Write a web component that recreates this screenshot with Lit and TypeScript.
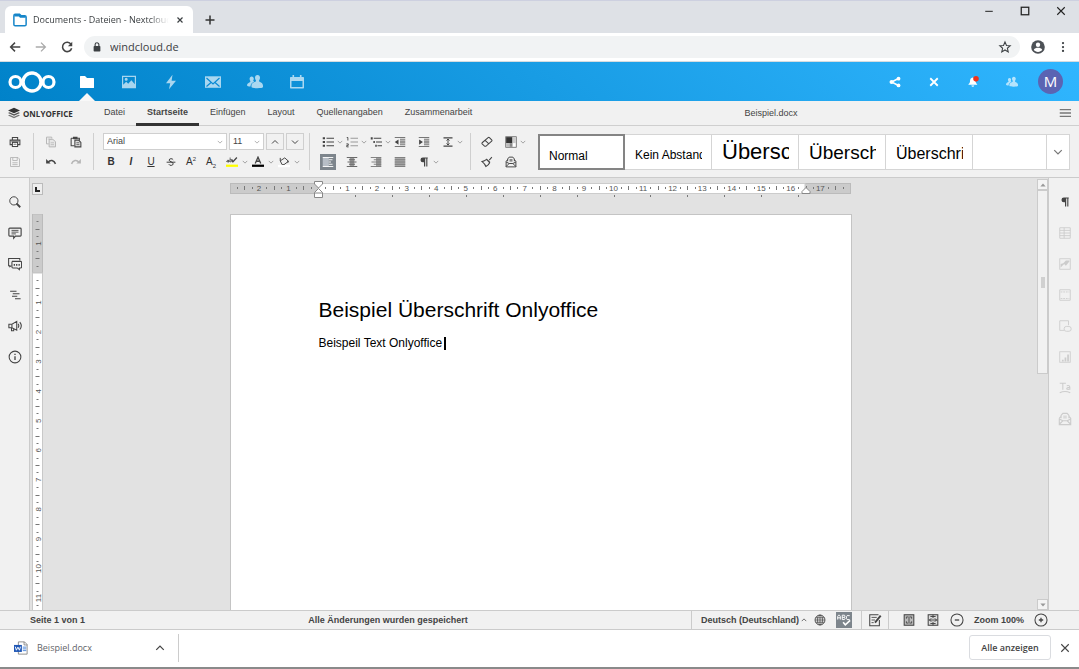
import { LitElement, html, css, svg, SVGTemplateResult } from "lit";
import { customElement } from "lit/decorators.js";
import { classMap } from "lit/directives/class-map.js";

/* ---------- icon set, all on a 16 x 16 grid, drawn in currentColor ---------- */
const G = "#9a9a9a";
const icons: Record<string, SVGTemplateResult> = {
  back: svg`<path d="M14 8H3M8 3L3 8l5 5" fill="none" stroke="currentColor" stroke-width="1.7"/>`,
  forward: svg`<path d="M2 8h11M8 3l5 5-5 5" fill="none" stroke="currentColor" stroke-width="1.5"/>`,
  reload: svg`<path d="M12.6 5A5.3 5.3 0 1 0 13.3 9.4" fill="none" stroke="currentColor" stroke-width="1.8"/><path d="M14 2v5H9z" fill="currentColor"/>`,
  lock: svg`<rect x="3.5" y="6.5" width="9" height="7.5" rx="1" fill="currentColor"/><path d="M5.5 7V4.800a2.500 2.500 0 0 1 5 0V7" fill="none" stroke="currentColor" stroke-width="1.5"/>`,
  star: svg`<path d="M8 2.200l1.700 4 4.300.4-3.300 2.800 1 4.200L8 11.400l-3.700 2.200 1-4.200L2 6.600l4.300-.4z" fill="none" stroke="currentColor" stroke-width="1.2"/>`,
  person: svg`<circle cx="8" cy="8" r="7.800" fill="currentColor"/><circle cx="8" cy="5.400" r="2.500" fill="#fff"/><path d="M3.200 11.200c.8-1.800 3-2.300 4.800-2.300s4 .5 4.800 2.300c-1 1.600-2.800 2.500-4.800 2.500s-3.800-.9-4.800-2.500z" fill="#fff"/>`,
  kebab: svg`<circle cx="8" cy="2.800" r="1.500" fill="currentColor"/><circle cx="8" cy="8" r="1.500" fill="currentColor"/><circle cx="8" cy="13.200" r="1.500" fill="currentColor"/>`,
  close: svg`<path d="M3 3l10 10M13 3L3 13" fill="none" stroke="currentColor" stroke-width="2.400"/>`,
  closeThin: svg`<path d="M2 2l12 12M14 2L2 14" fill="none" stroke="currentColor" stroke-width="1.800"/>`,
  plus: svg`<path d="M8 2v12M2 8h12" fill="none" stroke="currentColor" stroke-width="2"/>`,
  minimize: svg`<path d="M2 8.500h12" stroke="currentColor" stroke-width="1.600"/>`,
  maximize: svg`<rect x="2" y="2" width="12" height="12" fill="none" stroke="currentColor" stroke-width="2"/>`,
  favicon: svg`<path d="M2.500 1.500h5L9 3h4.500A1.500 1.500 0 0 1 15 4.500V13a1.500 1.500 0 0 1-1.500 1.500h-11A1.500 1.500 0 0 1 1 13V3a1.500 1.500 0 0 1 1.500-1.500z" fill="#fff" stroke="#1585c9" stroke-width="1.700"/><path d="M1.500 1.500H7.500l1.500 2h5.500v1.800H8L6.800 4H1.500z" fill="#1585c9"/>`,

  files: svg`<path d="M1.600 2a.6.6 0 0 0-.6.6v10.800c0 .4.200.6.600.6h12.800c.4 0 .6-.2.600-.6V4.600c0-.4-.2-.6-.6-.6H8L6 2z" fill="currentColor"/>`,
  photos: svg`<path fill-rule="evenodd" d="M1 1.800h14v12.400H1zM2.200 3v7.800l3-3 2 2 3.200-3.600 3.400 4V3zm3 .8a1.500 1.500 0 1 1 0 3 1.500 1.500 0 0 1 0-3z" fill="currentColor"/>`,
  activity: svg`<path d="M9.500.8L3 9.300h4.200L6 15.200l7-8.500H8.600z" fill="currentColor"/>`,
  mail: svg`<rect x="0" y="2.300" width="16" height="11.500" fill="currentColor"/><path d="M1.500 4L8 10l6.500-6M1.500 12.500l4.500-4M14.500 12.500L10 8.500" fill="none" stroke="#0b8ad6" stroke-width="1.200"/>`,
  contacts: svg`<path d="M10.500 1C8.900 1 8 2.300 8 3.800c0 1 .4 1.900.9 2.500v1.300C7.500 8.200 4.500 9 4.500 11.500V13c0 .8 2.500 1.200 5.800 1.200s5.700-.4 5.700-1.200v-1.300c0-2.700-2.700-3.400-3.900-4.100V6.300c.5-.6.900-1.500.9-2.500C13 2.300 12.100 1 10.500 1z" fill="currentColor"/><path d="M4.700 2.500c-1.300 0-2.100 1-2.100 2.300 0 .9.300 1.600.7 2.100v1C2.200 8.500 0 9.200 0 11.200c0 1 1.500 1.200 3.500 1.300.1-2.600 1.500-3.700 3.800-4.900C6.900 7.400 6.500 7 6.100 6.800c.4-.4.7-1.100.7-2 0-1.300-.8-2.300-2.100-2.300z" fill="currentColor"/>`,
  calendar: svg`<path fill-rule="evenodd" d="M3.500 1h1.600v2h5.800V1h1.600v2H14c.6 0 1 .4 1 1v9.500c0 .6-.4 1-1 1H2c-.6 0-1-.4-1-1V4c0-.6.4-1 1-1h1.500zM2.500 7v6h11V7z" fill="currentColor"/>`,
  share: svg`<path d="M12.500 3.300L3.500 8l9 4.700" fill="none" stroke="currentColor" stroke-width="2"/><circle cx="12.700" cy="3.500" r="2.500" fill="currentColor"/><circle cx="3.500" cy="8" r="2.800" fill="currentColor"/><circle cx="12.700" cy="12.500" r="2.500" fill="currentColor"/>`,
  bell: svg`<path d="M7.500 2C5 2.500 4 4.500 4 7.300c0 1.700-1 2.700-2 3.500v.9h11.500v-.9c-1-.8-2-1.800-2-3.500 0-2.800-1.200-4.800-4-5.300zM5.800 12.700a2 2 0 0 0 3.900 0z" fill="currentColor"/><circle cx="12" cy="3.800" r="3.700" fill="#f0321c"/>`,

  stack: svg`<path d="M8 1l8 3.700-8 3.700L0 4.700z" fill="#333"/><path d="M2 7l6 2.800L14 7l2 1-8 3.700L0 8z" fill="#555"/><path d="M2 10.300l6 2.800 6-2.800 2 1L8 15l-8-3.700z" fill="#777"/>`,
  menu: svg`<path d="M1 3.500h15M1 8h15M1 12.500h15" stroke="#777" stroke-width="1.700"/>`,
  print: svg`<path d="M4.500 5V2h7v3M4.500 11.500h-3V5.500h13v6h-3" fill="none" stroke="currentColor" stroke-width="1.400"/><rect x="4.500" y="8.500" width="7" height="5.500" fill="#fff" stroke="currentColor" stroke-width="1.400"/><path d="M3 7h10M6 11h4" stroke="currentColor"/>`,
  save: svg`<path d="M2 2h10l2 2v10H2z" fill="none" stroke="currentColor" stroke-width="1.200"/><path d="M5 2v4h6V2M4.500 9h7M4.500 11.500h7" fill="none" stroke="currentColor" stroke-width="1.200"/>`,
  copy: svg`<path d="M2 1.500h7v2M2 1.500v9h3" fill="none" stroke="currentColor" stroke-width="1.300"/><path d="M5.500 4.500h5l3.500 3v7H5.500z" fill="#e6e6e6" stroke="currentColor" stroke-width="1.300"/><path d="M3.500 4h4M7.500 9h4.500M7.500 11.500h4.500" stroke="currentColor"/>`,
  paste: svg`<path d="M1.500 3h11v3M1.500 3v10H6" fill="none" stroke="currentColor" stroke-width="1.400"/><rect x="4" y="1" width="6" height="3.200" fill="currentColor"/><path d="M6.500 5.500h5l3 3v6h-8z" fill="#ddd" stroke="currentColor" stroke-width="1.400"/><path d="M8.500 9h4M8.500 11.500h4" stroke="currentColor"/>`,
  undo: svg`<path d="M1.500 4v6h6z" fill="currentColor"/><path d="M4 8.500c3-4 8-3 10 2" fill="none" stroke="currentColor" stroke-width="2"/>`,
  redo: svg`<path d="M14.500 4v6h-6z" fill="currentColor"/><path d="M12 8.500c-3-4-8-3-10 2" fill="none" stroke="currentColor" stroke-width="2"/>`,
  highlight: svg`<path d="M1 8c0-3 3-3 3 0v-3M4 8H2.500C1 8 1 6.500 2.500 6.500H4M5.500 2v6M5.500 5c2.500-1.500 3.500 3 0 3" fill="none" stroke="currentColor"/><path d="M9 8l5.500-6M7.500 4.500l2 4" stroke="currentColor" stroke-width="1.700"/><rect x="0" y="11.500" width="16" height="3" fill="#ffff00"/>`,
  fontColor: svg`<path d="M4.300 10L8 1.500 11.700 10M5.500 7h5" fill="none" stroke="currentColor" stroke-width="1.700"/><rect x="0" y="11.500" width="16" height="3" fill="#000"/>`,
  fill: svg`<path d="M3 6.500L9 2.500l5 4.500-6 4.500H5.500zM3 2.500v4" fill="none" stroke="currentColor" stroke-width="1.300"/><path d="M12 5.500l2.500 2-1.500 2z" fill="currentColor"/><rect x="0" y="12" width="16" height="3" fill="#fff"/>`,
  strike: svg`<path d="M11.500 4.500C10.500 2 5 2 5 5c0 2.500 6.500 2.500 6.500 6 0 3-6 3.300-7 .5M1 8.300h14" fill="none" stroke="currentColor" stroke-width="1.500"/>`,
  bullets: svg`<path d="M6 3h10M6 8h10M6 13h10" stroke="currentColor" stroke-width="1.500"/><path d="M1 1.700h3v2.600H1zM1 6.700h3v2.600H1zM1 11.700h3v2.600H1z" fill="currentColor"/>`,
  numbers: svg`<path d="M6 3h10M6 8h10M6 13h10" stroke="${G}" stroke-width="1.500"/><path d="M1 2h1.500v4M.5 10.500h2.500v2H1v2h2.500" fill="none" stroke="currentColor" stroke-width="1.200"/>`,
  multilevel: svg`<path d="M5 3h10M8 8h8M10 13h6" stroke="currentColor" stroke-width="1.500"/><path d="M1 1.500h2.600v3H1zM4.500 6.700h2v2.600h-2zM7 11.700h2v2.600H7z" fill="currentColor"/>`,
  outdent: svg`<path d="M1 2h14M1 14h14M8 4.400h7M8 6.800h7M8 9.200h7M8 11.600h7" stroke="#777" stroke-width="1.500"/><path d="M6 4.500v7L1 8z" fill="currentColor"/>`,
  indent: svg`<path d="M1 2h14M1 14h14M8 4.400h7M8 6.800h7M8 9.200h7M8 11.600h7" stroke="#777" stroke-width="1.500"/><path d="M1.500 4.500v7l5-3.500z" fill="currentColor"/>`,
  spacing: svg`<path d="M2 2.500h12M2 13.500h12" stroke="currentColor" stroke-width="1.500"/><path d="M8 4v8M6 6l2-2 2 2M6 10l2 2 2-2" fill="none" stroke="currentColor" stroke-width="1.300"/>`,
  alignLeft: svg`<rect x="1" y="2" width="8" height="12" fill="#b7bec6"/><path d="M1 2h14M1 14h14M9 5h5M9 8h3M9 11h5" stroke="#fff" stroke-width="1.200"/>`,
  alignCenter: svg`<rect x="5" y="2" width="6" height="12" fill="${G}"/><path d="M1 2h14M4 5h8M2 8h12M4 11h8M1 14h14" stroke="#666" stroke-width="1.300"/>`,
  alignRight: svg`<rect x="8" y="2" width="7" height="12" fill="${G}"/><path d="M1 2h14M5 5h10M2 8h13M5 11h10M1 14h14" stroke="#777" stroke-width="1.200"/>`,
  justify: svg`<rect x="1" y="2" width="14" height="12" fill="#aaa"/><path d="M1 2h14M1 5h14M1 8h14M1 11h14M1 14h14" stroke="#777" stroke-width="1.200"/>`,
  para: svg`<path d="M13 2H6.500a3.200 3.200 0 0 0 0 6.400H8V14h1.600V3.300H11V14h1.500V3.300h.5z" fill="currentColor"/>`,
  eraser: svg`<path d="M1.500 9L9.500 2.200c.6-.5 1.200-.5 1.700 0l3 3c.5.500.5 1.200 0 1.700L6.500 13.700H5l-3.500-3.300c-.4-.4-.4-1 0-1.400zM5.500 5.700l5 4.700" fill="none" stroke="currentColor" stroke-width="1.400"/>`,
  brush: svg`<path d="M14.500 1.500L11 5.500M7.500 4.500C5.500 6 3.500 7 1.500 7.500c2 1.500 4 4 5 6.500 2-1 4-2.500 5-5zM7 4l5 4.500" fill="none" stroke="currentColor" stroke-width="1.400"/>`,
  scheme: svg`<rect x="1" y="1" width="14" height="14" fill="#fff" stroke="#555"/><rect x="1.500" y="1.500" width="8.500" height="8" fill="#333"/><rect x="10" y="1.500" width="4.500" height="8" fill="#ccc"/><rect x="1.500" y="9.500" width="4.500" height="5" fill="#bbb"/><rect x="6" y="9.500" width="4" height="5" fill="#888"/>`,
  merge: svg`<path d="M3.500 7V4l2-2.500h5l2 2.500v3M1.500 7v7.500h13V7l-2-2M1.500 7l2-2M1.500 14l4-4h5l4 4M1.500 8l4 2M14.500 8l-4 2" fill="none" stroke="currentColor" stroke-width="1.300"/><path d="M6 4h4v3.500H6z" fill="currentColor" opacity=".6"/>`,

  search: svg`<circle cx="6.500" cy="6.500" r="5.500" fill="none" stroke="currentColor" stroke-width="1.300"/><path d="M10 10l5 5" stroke="currentColor" stroke-width="2.400"/>`,
  comment: svg`<path d="M2 2.500h12a1 1 0 0 1 1 1v7a1 1 0 0 1-1 1H8.500L6.500 14V11.500H2a1 1 0 0 1-1-1v-7a1 1 0 0 1 1-1z" fill="none" stroke="currentColor" stroke-width="1.300"/><path d="M4 5h8M4 7h8M4 9h5" stroke="currentColor"/>`,
  chat: svg`<path d="M4 10L2 11V10H.7V1.700h12.800V4" fill="none" stroke="currentColor" stroke-width="1.200"/><path d="M5 5h9.500a1 1 0 0 1 1 1v5.500a1 1 0 0 1-1 1h-1.500v2l-2.500-2H5.500a1 1 0 0 1-1-1V6z" fill="#f1f1f1" stroke="currentColor" stroke-width="1.200"/><path d="M6.500 8h1.500v2H6.500zM9.200 8h1.500v2H9.200zM12 8h1.500v2H12z" fill="currentColor"/>`,
  outline: svg`<path d="M1.500 3H10M5 6.300h9M4 9.700h7M8 13h7.500" stroke="currentColor" stroke-width="1.500"/>`,
  speaker: svg`<path d="M1 6h3.500L10 2.700v10L4.500 10H1zM4 10v3.500h2.500V11M4.500 6v4" fill="none" stroke="currentColor" stroke-width="1.200"/><path d="M11.500 5.500c1 1.300 1 3.200 0 4.500M13.500 3.500c2 2.500 2 6 0 8.500" fill="none" stroke="currentColor" stroke-width="1.200"/>`,
  info: svg`<circle cx="8" cy="8" r="6.700" fill="none" stroke="currentColor" stroke-width="1.200"/><path d="M8 7v4.500M8 4.300v1.500" stroke="currentColor" stroke-width="1.500"/>`,

  table: svg`<path d="M2 2h12v12H2zM2 5h12M2 8h12M2 11h12M7 2v12" fill="none" stroke="currentColor"/>`,
  image: svg`<rect x="2" y="2" width="12" height="12" fill="none" stroke="currentColor"/><path d="M3 12l4-4 2 2 4-5v-1H9l-3 3-3 1z" fill="currentColor"/>`,
  headerFooter: svg`<path d="M2 2h12v12H2z" fill="none" stroke="currentColor"/><path d="M3 4.500h10M3 12h10" stroke="currentColor" stroke-dasharray="2 1"/>`,
  shape: svg`<path d="M7 13H2V2h10v5" fill="none" stroke="currentColor"/><rect x="7" y="8.500" width="8" height="5.500" rx="2.500" fill="none" stroke="currentColor"/>`,
  chart: svg`<rect x="2" y="2" width="12" height="12" fill="none" stroke="currentColor"/><path d="M5.500 13v-2M8.500 13V8.500M11.500 13V5" stroke="currentColor" stroke-width="2"/>`,
  textArt: svg`<path d="M2 2.500h7M5.500 2.500V10M10 5.500c3-1 3.500.5 3.500 2V10M13.500 7.200c-5 0-4.500 3.500 0 2M2 13.500c4-2 8-2 12 0" fill="none" stroke="currentColor" stroke-width="1.200"/>`,

  globe: svg`<circle cx="8" cy="8" r="6.600" fill="none" stroke="currentColor" stroke-width="1.200"/><path d="M1.500 8h13M8 1.500v13M2.500 5h11M2.500 11h11" stroke="currentColor"/><ellipse cx="8" cy="8" rx="3.300" ry="6.500" fill="none" stroke="currentColor"/>`,
  spell: svg`<path d="M.8 7.500V4l1-1.500h1l1 1.500v3.500M.8 5.500h3M6 2.500v5h2.500l.7-1-.7-1.500.7-1.500-.7-1zM6 5h2.500M14.500 3h-3l-.7 1v2.500l.7 1h3" fill="none" stroke="#fff" stroke-width="1.100"/><path d="M7 10.500l2.500 3L15 8.500" fill="none" stroke="#fff" stroke-width="1.800"/>`,
  track: svg`<path d="M12 2H2v12.500h11V8" fill="none" stroke="currentColor" stroke-width="1.200"/><path d="M4 5h6M4 8h4M4 11h2.500" stroke="currentColor"/><path d="M14.500 3L8 11" stroke="currentColor" stroke-width="2.200"/>`,
  fitPage: svg`<rect x="2.500" y="2" width="11" height="12" fill="#bbb" stroke="currentColor" stroke-width="1.200"/><path d="M5 4.500h2M5 4.500v2M11 4.500H9M11 4.500v2M5 11.500h2M5 11.500v-2M11 11.500H9M11 11.500v-2M8 4v8" fill="none" stroke="currentColor"/>`,
  fitWidth: svg`<rect x="2.500" y="2" width="11" height="12" fill="#ddd" stroke="currentColor" stroke-width="1.200"/><path d="M3 8h10M6 6L4 8l2 2M10 6l2 2-2 2M8 2v4M8 10v4M5 4h6M5 12h6" fill="none" stroke="currentColor" stroke-width="1.100"/>`,
  zoomOut: svg`<circle cx="8" cy="8" r="6.900" fill="none" stroke="currentColor" stroke-width="1.200"/><path d="M5.500 8h5" stroke="currentColor" stroke-width="1.500"/>`,
  zoomIn: svg`<circle cx="8" cy="8" r="6.900" fill="none" stroke="currentColor" stroke-width="1.200"/><path d="M5.500 8h5M8 5.500v5" stroke="currentColor" stroke-width="1.500"/>`,
  word: svg`<path d="M5 1h7l3 3v11H5z" fill="#fff" stroke="#777" stroke-width=".9"/><path d="M11.500 1v3.500H15" fill="none" stroke="#777" stroke-width=".9"/><path d="M10 7h4M10 9h4M10 11h4" stroke="#3f7ed8"/><rect x="0" y="4.500" width="9" height="8" fill="#1f57b5"/><path d="M1.500 6.500l1.200 4L4.500 7l1.700 3.500 1.200-4" fill="none" stroke="#fff" stroke-width="1.100"/>`,
  down: svg`<path d="M2 5l6 6 6-6" fill="none" stroke="currentColor" stroke-width="2"/>`,
  up: svg`<path d="M2 11l6-6 6 6" fill="none" stroke="currentColor" stroke-width="2"/>`,
  triUp: svg`<path d="M1 12l7-8 7 8z" fill="currentColor"/>`,
  triDown: svg`<path d="M1 4l7 8 7-8z" fill="currentColor"/>`,
};

const icon = (name: string, size = "s12") =>
  html`<svg class="icon ${size}" viewBox="0 0 16 16" aria-hidden="true">${icons[name]}</svg>`;

const shared = css`
  *, *::before, *::after { box-sizing: border-box; }
  button, select, input { font: inherit; color: inherit; }
  button { display: flex; align-items: center; justify-content: center; margin: 0; padding: 0; border: 0; background: none; }
  a { color: inherit; text-decoration: none; }
  .icon { display: block; flex: none; }
  .s6 { width: 6px; height: 6px; }
  .s8 { width: 8px; height: 8px; }
  .s10 { width: 10px; height: 10px; }
  .s12 { width: 12px; height: 12px; }
  .s14 { width: 14px; height: 14px; }
  .s16 { width: 16px; height: 16px; }
`;

/* ---------- browser window chrome ---------- */
@customElement("browser-bar")
class BrowserBar extends LitElement {
  static styles = [shared, css`
    :host { display: block; font-family: "Open Sans", "Noto Sans", sans-serif; color: #3c4043; }
    .strip { display: flex; align-items: flex-end; height: 33px; padding-left: 5px; background: #dee1e6; border-top: 1px solid #cdd0e0; }
    .tab { display: flex; align-items: center; gap: 6px; width: 188px; height: 27px; padding: 0 9px 0 8px; background: #fff; border-radius: 6px 6px 0 0; }
    .title { flex: 1; overflow: hidden; white-space: nowrap; font-size: 9px; line-height: 14px; mask-image: linear-gradient(90deg, #000 85%, transparent 99%); }
    .new { width: 33px; height: 27px; color: #333; }
    .window { display: flex; align-self: flex-start; margin-left: auto; color: #222; }
    .window button { width: 36px; height: 20px; }
    .bar { display: flex; align-items: center; height: 29px; padding-left: 2px; background: #fff; border-bottom: 1px solid #d5dce0; }
    .nav { width: 26px; height: 28px; color: #444; }
    .nav.dim { color: #aaa; }
    .omni { display: flex; flex: 1; align-items: center; gap: 7px; height: 22px; margin: 0 8px 0 4px; padding: 0 8px 0 7px; border-radius: 11px; background: #f1f3f4; }
    .url { flex: 1; min-width: 0; padding: 0; border: 0; outline: 0; background: none; font-size: 11px; line-height: 16px; }
    .person { width: 19px; color: #4d5156; }
    .more { width: 32px; }
  `];
  render() {
    return html`
      <div class="strip">
        <div class="tab">${icon("favicon", "s14")}<span class="title">Documents - Dateien - Nextcloud</span>
          <button aria-label="Tab schließen">${icon("close", "s8")}</button></div>
        <button class="new" aria-label="Neuer Tab">${icon("plus")}</button>
        <div class="window">
          <button aria-label="Minimieren">${icon("minimize", "s10")}</button>
          <button aria-label="Maximieren">${icon("maximize", "s10")}</button>
          <button aria-label="Schließen">${icon("closeThin", "s10")}</button>
        </div>
      </div>
      <div class="bar">
        <button class="nav" aria-label="Zurück">${icon("back", "s14")}</button>
        <button class="nav dim" aria-label="Vorwärts">${icon("forward", "s14")}</button>
        <button class="nav" aria-label="Neu laden">${icon("reload", "s14")}</button>
        <div class="omni">${icon("lock", "s12")}
          <input class="url" aria-label="Adresse" value="windcloud.de">
          <button aria-label="Lesezeichen">${icon("star", "s14")}</button></div>
        <button class="person" aria-label="Profil">${icon("person", "s14")}</button>
        <button class="more" aria-label="Menü">${icon("kebab", "s12")}</button>
      </div>`;
  }
}

/* ---------- cloud header ---------- */
@customElement("cloud-header")
class CloudHeader extends LitElement {
  static styles = [shared, css`
    :host { display: flex; align-items: stretch; justify-content: space-between; height: 39px; padding: 0 9px 0 8px;
      background: linear-gradient(40deg, #0082c9 0%, #30b6ff 100%); color: #fff; font-family: "Open Sans", sans-serif; }
    nav, .side { display: flex; }
    .logo { display: flex; align-items: center; width: 58px; }
    .logo svg { width: 48px; height: 24px; }
    .app { position: relative; display: flex; align-items: center; justify-content: center; width: 42px; opacity: .65; }
    .app.on { opacity: 1; }
    .app.on::after { content: ""; position: absolute; bottom: 0; border: 8px solid transparent; border-top-width: 0; border-bottom-color: #f8f8f8; }
    .side button { width: 39px; }
    .side .dim { opacity: .65; }
    .avatar { width: 25px; height: 25px; border-radius: 50%; background: #5b64b3; font-size: 15px; line-height: 25px; }
  `];
  render() {
    const apps = [["files", "Dateien"], ["photos", "Fotos"], ["activity", "Aktivität"], ["mail", "E-Mail"], ["contacts", "Kontakte"], ["calendar", "Kalender"]];
    return html`
      <nav>
        <a class="logo" href="#" aria-label="Startseite"><svg viewBox="0 0 48 24"><g fill="none" stroke="#fff">
          <circle cx="24" cy="12" r="9" stroke-width="3.500"/><circle cx="7.500" cy="12" r="5.500" stroke-width="3.200"/><circle cx="40.500" cy="12" r="5.500" stroke-width="3.200"/></g></svg></a>
        ${apps.map(([i, label], n) => html`<a class=${classMap({ app: true, on: n === 0 })} href="#" aria-label=${label}>${icon(i, "s16")}</a>`)}
      </nav>
      <div class="side">
        <button aria-label="Teilen">${icon("share", "s12")}</button>
        <button aria-label="Schließen">${icon("close", "s12")}</button>
        <button aria-label="Benachrichtigungen">${icon("bell", "s12")}</button>
        <button class="dim" aria-label="Kontakte">${icon("contacts", "s12")}</button>
        <button aria-label="Konto"><span class="avatar">M</span></button>
      </div>`;
  }
}

/* ---------- editor tabs and toolbar ---------- */
@customElement("editor-toolbar")
class EditorToolbar extends LitElement {
  static styles = [shared, css`
    :host { display: block; background: #f1f1f1; color: #444; font-family: "Liberation Sans", Arial, sans-serif; font-size: 9px; }
    .tabs { display: flex; align-items: stretch; height: 25px; padding: 0 8px; border-bottom: 1px solid #cfcfcf; }
    .brand { display: flex; align-items: center; gap: 3px; width: 85px; font-family: "Open Sans", sans-serif; font-size: 8px; font-weight: 700; color: #333; }
    .tab { height: 25px; padding: 0 11px; line-height: 22px; border-bottom: 3px solid transparent; }
    .tab.on { font-weight: 700; border-bottom-color: #333; }
    .file { flex: 1; text-align: center; line-height: 25px; }
    .tools { display: flex; align-items: center; height: 52px; padding: 0 9px 0 6px; border-bottom: 1px solid #cbcbcb; }
    .group { display: grid; grid-template-rows: 18px 18px; row-gap: 2px; }
    .row { display: flex; align-items: center; }
    .sep { width: 1px; height: 37px; background: #cfcfcf; flex: none; }
    .ib { width: 18px; height: 18px; }
    .dim { color: #b5b5b5; }
    .chev { width: 8px; height: 18px; color: #888; }
    .g1 { width: 27px; }
    .g2 { width: 59px; padding-left: 8px; }
    .g2 .row { gap: 7px; }
    .g3 { width: 215px; padding-left: 7px; }
    .g3 .fields { gap: 2px; padding-left: 2px; }
    .box { position: relative; display: flex; height: 17px; }
    .box select { width: 100%; appearance: none; padding: 0 3px; border: 1px solid #cfcfcf; border-radius: 0; background: #fff; font-size: 9px; line-height: 15px; outline: 0; }
    .box .icon { position: absolute; right: 4px; top: 6px; color: #999; pointer-events: none; }
    .font { width: 124px; }
    .size { width: 35px; }
    .step { width: 18px; height: 17px; border: 1px solid #cfcfcf; }
    .g3 .ib.t { width: 20px; font-size: 10px; line-height: 18px; color: #333; }
    .b { font-weight: 700; } .i { font-style: italic; font-weight: 700; } .u { text-decoration: underline; }
    .sup sup, .sub sub { font-size: 6px; line-height: 1; }
    .pair { display: flex; padding-left: 0; width: 26px; flex: none; }
    .pair:first-of-type { width: 28px; padding-left: 2px; }
    .g4 { width: 160px; padding-left: 10px; }
    .cell { display: flex; width: 24px; align-items: center; }
    .cell .ib { width: 16px; height: 16px; }
    .cell .on { background: #7d858c; }
    .g5 { width: 67px; padding-left: 8px; }
    .styles { display: flex; flex: 1; min-width: 0; height: 36px; background: #fff; border: 1px solid #d5d5d5; }
    .style { align-items: flex-start; justify-content: flex-start; width: 87px; flex: none; height: 34px; padding: 0 9px 0 10px; border-right: 1px solid #d5d5d5; color: #000; overflow: hidden; }
    .style span { flex: 1; overflow: hidden; white-space: nowrap; line-height: 30px; text-align: left; }
    .style span::before { content: ""; display: inline-block; height: 24px; }
    .style.on { height: 36px; width: 87px; margin: -1px 0 -1px -1px; padding: 0 9px; border: 2px solid #848484; }
    .n12 { font-size: 12px; } .n22 { font-size: 22px; } .n19 { font-size: 19px; } .n16 { font-size: 16px; }
    .rest { flex: 1; }
    .drop { width: 23px; border-left: 1px solid #d5d5d5; color: #777; }
  `];
  cell(name: string, label: string, menu = false, on = false) {
    return html`<div class="cell"><button class=${classMap({ ib: true, on })} aria-label=${label}>${icon(name)}</button>
      ${menu ? html`<button class="chev" aria-label="${label}: Optionen">${icon("down", "s6")}</button>` : ""}</div>`;
  }
  render() {
    const tabs = ["Datei", "Startseite", "Einfügen", "Layout", "Quellenangaben", "Zusammenarbeit"];
    const looks: [string, string][] = [["Normal", "n12"], ["Kein Abstand", "n12"], ["Überschrift 1", "n22"], ["Überschrift 2", "n19"], ["Überschrift 3", "n16"]];
    const ib = (n: string, l: string, c = "") => html`<button class="ib ${c}" aria-label=${l}>${icon(n)}</button>`;
    const pair = (n: string, l: string) => html`<div class="pair">${ib(n, l)}<button class="chev" aria-label="${l}: Optionen">${icon("down", "s6")}</button></div>`;
    return html`
      <div class="tabs">
        <div class="brand">${icon("stack", "s12")}ONLYOFFICE</div>
        ${tabs.map(t => html`<button class=${classMap({ tab: true, on: t === "Startseite" })}>${t}</button>`)}
        <span class="file">Beispiel.docx</span>
        <button aria-label="Ansicht">${icon("menu", "s12")}</button>
      </div>
      <div class="tools">
        <div class="group g1"><div class="row">${ib("print", "Drucken")}</div><div class="row">${ib("save", "Speichern", "dim")}</div></div>
        <div class="sep"></div>
        <div class="group g2"><div class="row">${ib("copy", "Kopieren", "dim")}${ib("paste", "Einfügen")}</div>
          <div class="row">${ib("undo", "Rückgängig")}${ib("redo", "Wiederholen", "dim")}</div></div>
        <div class="sep"></div>
        <div class="group g3">
          <div class="row fields">
            <label class="box font"><select aria-label="Schriftart"><option>Arial</option></select>${icon("down", "s6")}</label>
            <label class="box size"><select aria-label="Schriftgrad"><option>11</option></select>${icon("down", "s6")}</label>
            <button class="step" aria-label="Größer">${icon("up", "s8")}</button>
            <button class="step" aria-label="Kleiner">${icon("down", "s8")}</button>
          </div>
          <div class="row">
            <button class="ib t b">B</button><button class="ib t i">I</button><button class="ib t u">U</button>
            <button class="ib t" aria-label="Durchgestrichen">${icon("strike", "s10")}</button>
            <button class="ib t sup"><span>A<sup>2</sup></span></button><button class="ib t sub"><span>A<sub>2</sub></span></button>
            ${pair("highlight", "Texthervorhebung")}${pair("fontColor", "Schriftfarbe")}${pair("fill", "Füllung")}
          </div>
        </div>
        <div class="sep"></div>
        <div class="group g4">
          <div class="row">${this.cell("bullets", "Aufzählung", true)}${this.cell("numbers", "Nummerierung", true)}${this.cell("multilevel", "Liste mit mehreren Ebenen", true)}${this.cell("outdent", "Einzug verkleinern")}${this.cell("indent", "Einzug vergrößern")}${this.cell("spacing", "Zeilenabstand", true)}</div>
          <div class="row">${this.cell("alignLeft", "Linksbündig", false, true)}${this.cell("alignCenter", "Zentriert")}${this.cell("alignRight", "Rechtsbündig")}${this.cell("justify", "Blocksatz")}${this.cell("para", "Formatierungszeichen", true)}</div>
        </div>
        <div class="sep"></div>
        <div class="group g5">
          <div class="row">${this.cell("eraser", "Formatierung löschen")}${this.cell("scheme", "Farbschema", true)}</div>
          <div class="row">${this.cell("brush", "Format übertragen")}${this.cell("merge", "Seriendruck")}</div>
        </div>
        <div class="styles">
          ${looks.map(([t, c], n) => html`<button class=${classMap({ style: true, on: n === 0 })}><span class=${c}>${t}</span></button>`)}
          <div class="rest"></div>
          <button class="drop" aria-label="Mehr Formatvorlagen">${icon("down", "s10")}</button>
        </div>
      </div>`;
  }
}

/* ---------- document surface: rulers, page, scrollbar, side rails ---------- */
const CM = 29.55;

@customElement("editor-workspace")
class EditorWorkspace extends LitElement {
  static styles = [shared, css`
    :host { display: flex; min-height: 0; background: #e2e2e2; color: #444; font-family: "Liberation Sans", Arial, sans-serif; }
    .rail { display: flex; flex-direction: column; width: 30px; padding-top: 8px; background: #f1f1f1; border-right: 1px solid #cbcbcb; flex: none; }
    .rail button { height: 31px; width: 29px; flex: none; }
    .rail.right { width: 31px; border: 0; border-left: 1px solid #cbcbcb; color: #ccc; }
    .rail.right button { width: 32px; }
    .rail.right .active { color: #444; }
    .side { display: flex; flex-direction: column; width: 14px; padding: 5px 0 0 2px; gap: 19px; flex: none; overflow: hidden; }
    .corner { display: flex; align-items: center; justify-content: center; width: 11px; height: 12px; border: 1px solid #bbb; background: #eee; flex: none; }
    .corner::before { content: ""; width: 5px; height: 5px; border: solid #222; border-width: 0 0 2px 2px; }
    .vruler { display: block; width: 11px; flex: none; height: 1200px; }
    .canvas { display: flex; flex-direction: column; align-items: center; flex: 1; min-width: 0; overflow: hidden; }
    .hruler { display: block; width: 622px; height: 36px; flex: none; }
    text { font-family: "Liberation Sans", Arial, sans-serif; font-size: 8px; fill: #555; text-anchor: middle; }
    .page { flex: 1; width: 622px; padding: 81px 88px 0; background: #fff; border: 1px solid #c4c4c4; border-bottom: 0; color: #000; }
    h1 { margin: 0; font-size: 21px; font-weight: 400; line-height: 28px; }
    p { display: flex; align-items: center; gap: 2px; margin: 11px 0 0; font-size: 12px; line-height: 16px; }
    .caret { width: 2px; height: 13px; background: #000; }
    .scroll { display: flex; flex-direction: column; width: 11px; padding-top: 1px; flex: none; color: #999; }
    .arrow { width: 11px; height: 11px; border: 1px solid #cbcbcb; background: #f4f4f4; flex: none; }
    .track { flex: 1; }
    .thumb { display: flex; align-items: center; justify-content: center; height: 45%; border: 1px solid #cbcbcb; background: #f1f1f1; }
    .grip { width: 4px; height: 11px; background: #d0d0d0; }
  `];
  marks(from: number, to: number, origin: number, vertical: boolean) {
    const out: SVGTemplateResult[] = [];
    for (let q = Math.ceil(from * 4); q <= to * 4; q++) {
      if (q === 0) continue;
      const p = origin + (q / 4) * CM;
      const kind = Math.abs(q) % 4;
      const n = Math.abs(q) / 4;
      if (kind === 0) {
        out.push(vertical
          ? svg`<text transform="translate(8.500 ${p}) rotate(-90)">${n}</text>`
          : svg`<text x=${p} y="13">${n}</text>`);
      } else {
        const half = kind === 2 ? 2 : 1;
        out.push(vertical
          ? svg`<rect x=${5.5 - half} y=${Math.round(p)} width=${half * 2} height="1" fill="#777"/>`
          : svg`<rect x=${Math.round(p)} y=${10 - half} width="1" height=${half * 2} fill="#777"/>`);
      }
    }
    return out;
  }
  render() {
    const left = [["search", "Suchen"], ["comment", "Kommentare"], ["chat", "Chat"], ["outline", "Navigation"], ["speaker", "Feedback"], ["info", "Info"]];
    const right = [["para", "Absatz"], ["table", "Tabelle"], ["image", "Bild"], ["headerFooter", "Kopf- und Fußzeile"], ["shape", "Form"], ["chart", "Diagramm"], ["textArt", "TextArt"], ["merge", "Seriendruck"]];
    const stops = Array.from({ length: 13 }, (_, i) => 88 + 36.94 * (i + 1));
    return html`
      <div class="rail">${left.map(([i, l]) => html`<button aria-label=${l}>${icon(i, i === "outline" || i === "search" ? "s12" : "s14")}</button>`)}</div>
      <div class="side">
        <div class="corner"></div>
        <svg class="vruler" viewBox="0 0 11 1200">
          <rect x=".5" y="0" width="10" height="59" fill="#cbcbcb" stroke="#bbb"/>
          <rect x=".5" y="59" width="10" height="1141" fill="#fff" stroke="#c8c8c8"/>
          ${this.marks(-1.9, 36, 59, true)}
        </svg>
      </div>
      <div class="canvas">
        <svg class="hruler" viewBox="0 0 622 36">
          <rect x=".5" y="5.500" width="620" height="10" fill="#cbcbcb" stroke="#bbb"/>
          <rect x="88" y="5.500" width="487" height="10" fill="#fff" stroke="#ccc"/>
          ${this.marks(-2.8, 17.8, 88, false)}
          ${stops.map(x => svg`<rect x=${Math.round(x)} y="17" width="1" height="2" fill="#777"/>`)}
          <g fill="#fff" stroke="#888"><path d="M84.500 3.500h8v2.500l-4 4-4-4zM84.500 14.500l4-4 4 4v5h-8zM84.500 15h8M572 15.500v-2l4-4 4 4v2z"/></g>
        </svg>
        <main class="page">
          <h1>Beispiel Überschrift Onlyoffice</h1>
          <p>Beispeil Text Onlyoffice<span class="caret"></span></p>
        </main>
      </div>
      <div class="scroll">
        <button class="arrow" aria-label="Nach oben">${icon("triUp", "s6")}</button>
        <div class="track"><div class="thumb"><div class="grip"></div></div></div>
        <button class="arrow" aria-label="Nach unten">${icon("triDown", "s6")}</button>
      </div>
      <div class="rail right">${right.map(([i, l], n) => html`<button class=${classMap({ active: n === 0 })} aria-label=${l}>${icon(i, n === 0 ? "s12" : "s14")}</button>`)}</div>`;
  }
}

/* ---------- status bar and download shelf ---------- */
@customElement("editor-footer")
class EditorFooter extends LitElement {
  static styles = [shared, css`
    :host { display: block; color: #444; }
    .status { display: flex; align-items: stretch; height: 20px; padding: 0 31px 0 30px; background: #f1f1f1; border: solid #cbcbcb; border-width: 1px 0; font: 700 9px/19px "Liberation Sans", Arial, sans-serif; }
    .note { flex: 1; text-align: center; }
    .set { display: flex; align-items: center; border-left: 1px solid #cbcbcb; }
    .lang { gap: 2px; padding: 0 9px; }
    .lang button { gap: 2px; }
    .globe { width: 22px; height: 18px; }
    .spell { width: 16px; height: 16px; margin-left: 3px; background: #7d858c; }
    .track { padding: 0 6px; }
    .zoom { padding-left: 13px; gap: 10px; }
    .shelf { display: flex; align-items: center; height: 39px; padding: 0 0 2px 14px; background: #fff; border-bottom: 2px solid #8a8a8a; font: 9px/14px "Open Sans", "Noto Sans", sans-serif; }
    .item { display: flex; align-items: center; width: 165px; height: 28px; gap: 9px; border-right: 1px solid #ccc; padding-right: 13px; }
    .name { flex: 1; color: #5f6368; text-align: left; }
    .all { margin-left: auto; width: 82px; height: 25px; border: 1px solid #dadce0; border-radius: 3px; font-weight: 600; }
    .close { width: 28px; height: 25px; }
  `];
  render() {
    return html`
      <div class="status">
        <span>Seite 1 von 1</span>
        <span class="note">Alle Änderungen wurden gespeichert</span>
        <div class="set lang"><button>Deutsch (Deutschland) ${icon("up", "s6")}</button>
          <button class="globe" aria-label="Sprache">${icon("globe")}</button>
          <button class="spell" aria-label="Rechtschreibprüfung">${icon("spell", "s14")}</button></div>
        <div class="set track"><button aria-label="Änderungen verfolgen">${icon("track", "s14")}</button></div>
        <div class="set zoom"><button aria-label="Seite anpassen">${icon("fitPage", "s14")}</button>
          <button aria-label="Breite anpassen">${icon("fitWidth", "s14")}</button>
          <button aria-label="Verkleinern">${icon("zoomOut", "s14")}</button>
          <span>Zoom 100%</span>
          <button aria-label="Vergrößern">${icon("zoomIn", "s14")}</button></div>
      </div>
      <div class="shelf">
        <div class="item">${icon("word", "s14")}<a class="name" href="#">Beispiel.docx</a><button aria-label="Optionen">${icon("up", "s10")}</button></div>
        <button class="all">Alle anzeigen</button>
        <button class="close" aria-label="Leiste schließen">${icon("closeThin", "s10")}</button>
      </div>`;
  }
}

@customElement("app-root")
class AppRoot extends LitElement {
  static styles = css`
    :host { display: flex; flex-direction: column; height: 100vh; overflow: hidden; }
    .work { flex: 1; }
  `;
  render() {
    return html`<browser-bar></browser-bar><cloud-header></cloud-header><editor-toolbar></editor-toolbar>
      <editor-workspace class="work"></editor-workspace><editor-footer></editor-footer>`;
  }
}
